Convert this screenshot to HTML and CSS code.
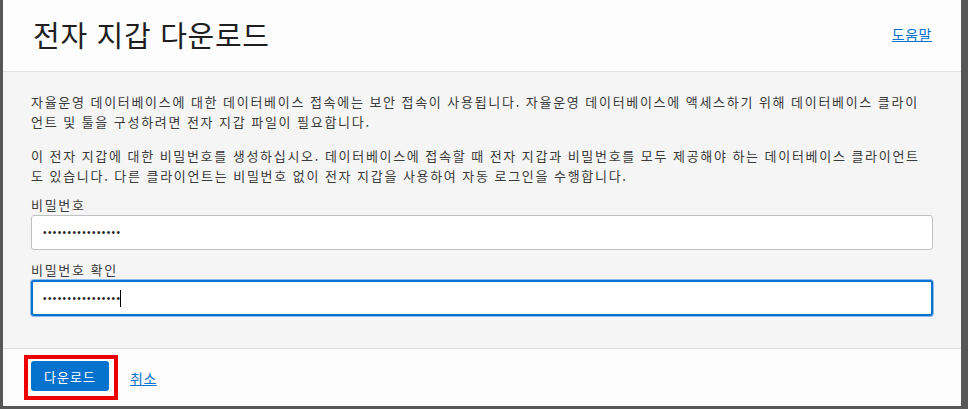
FILE: index.html
```html
<!DOCTYPE html>
<html lang="ko">
<head>
<meta charset="utf-8">
<title>전자 지갑 다운로드</title>
<link rel="stylesheet" href="styles.css">
</head>
<body>
<div class="dialog">
  <header class="dlg-header">
    <h1 class="dlg-title">전자 지갑 다운로드</h1>
    <a class="help-link" href="#">도움말</a>
  </header>
  <main class="dlg-body">
    <p class="para">자율운영 데이터베이스에 대한 데이터베이스 접속에는 보안 접속이 사용됩니다. 자율운영 데이터베이스에 액세스하기 위해 데이터베이스 클라이언트 및 툴을 구성하려면 전자 지갑 파일이 필요합니다.</p>
    <p class="para">이 전자 지갑에 대한 비밀번호를 생성하십시오. 데이터베이스에 접속할 때 전자 지갑과 비밀번호를 모두 제공해야 하는 데이터베이스 클라이언트도 있습니다. 다른 클라이언트는 비밀번호 없이 전자 지갑을 사용하여 자동 로그인을 수행합니다.</p>
    <label class="field-label" for="pw1">비밀번호</label>
    <div class="field">
      <input class="field-input" id="pw1" type="password" value="aaaaaaaaaaaaaaaa">
    </div>
    <label class="field-label" for="pw2">비밀번호 확인</label>
    <div class="field field-caret">
      <input class="field-input is-focused" id="pw2" type="password" value="aaaaaaaaaaaaaaaa">
    </div>
  </main>
  <footer class="dlg-footer">
    <span class="highlight-box"><button class="btn-primary" type="button">다운로드</button></span>
    <a class="cancel-link" href="#">취소</a>
  </footer>
</div>
</body>
</html>
```

FILE: styles.css
```css
* { box-sizing: border-box; }
html, body { margin: 0; padding: 0; }
body {
  background: #575757;
  width: 968px;
  height: 409px;
  overflow: hidden;
  font-family: "Noto Sans CJK KR", "Noto Sans", sans-serif;
  color: #333333;
}
.dialog {
  margin-left: 3px;
  width: 958px;
  height: 406px;
  display: flex;
  flex-direction: column;
  background: #f5f5f5;
}
.dlg-header {
  height: 72px;
  flex: 0 0 72px;
  background: #fdfdfd;
  border-bottom: 1px solid #e2e2e2;
  display: flex;
  align-items: center;
  justify-content: space-between;
  padding: 0 29px 4px 30px;
}
.dlg-title {
  margin: 0;
  font-size: 29px;
  font-weight: 400;
  letter-spacing: 0.7px;
  color: #1f1f1f;
  line-height: 36px;
}
.help-link, .cancel-link {
  color: #0572ce;
  font-size: 14px;
  letter-spacing: 0.5px;
  text-decoration: underline;
}
.dlg-body {
  flex: 1;
  padding: 20px 28px 0 28px;
}
.para {
  margin: 0 0 14px 0;
  font-size: 13px;
  line-height: 20px;
  letter-spacing: 1.7px;
  word-spacing: -0.5px;
  word-break: break-all;
  padding-right: 10px;
  color: #3a3a3a;
}
.para + .para { margin-bottom: 9px; }
.field-label {
  display: block;
  font-size: 13px;
  line-height: 20px;
  letter-spacing: 1.7px;
  word-spacing: -0.5px;
  color: #3a3a3a;
}
.field {
  position: relative;
  margin-bottom: 10px;
}
.field-input {
  display: block;
  width: 902px;
  height: 35px;
  border: 1px solid #c0c0c0;
  border-radius: 3px;
  background: #ffffff;
  padding: 0 11px;
  font-family: "Liberation Sans", sans-serif;
  font-size: 10px;
  letter-spacing: 1.4px;
  color: #222;
  outline: none;
}
.field-input.is-focused {
  border: 2px solid #0572ce;
  box-shadow: 0 0 0 1px #8fbcec;
  padding: 0 10px;
  height: 36px;
}
.field-caret::after {
  content: "";
  position: absolute;
  left: 89px;
  top: 10px;
  width: 1px;
  height: 17px;
  background: #000;
}
.dlg-footer {
  flex: 0 0 58px;
  border-top: 1px solid #dedede;
  background: #fcfcfc;
  display: flex;
  align-items: center;
  padding-left: 21px;
  gap: 12px;
}
.highlight-box {
  display: inline-flex;
  border: 4px solid #ee0000;
  padding: 2px 5px 5px 3px;
}
.btn-primary {
  background: #0572ce;
  color: #ffffff;
  border: 0;
  border-radius: 3px;
  width: 78px;
  height: 30px;
  font-family: "Noto Sans CJK KR", sans-serif;
  font-size: 13px;
  letter-spacing: 1px;
  padding: 0;
}
```
